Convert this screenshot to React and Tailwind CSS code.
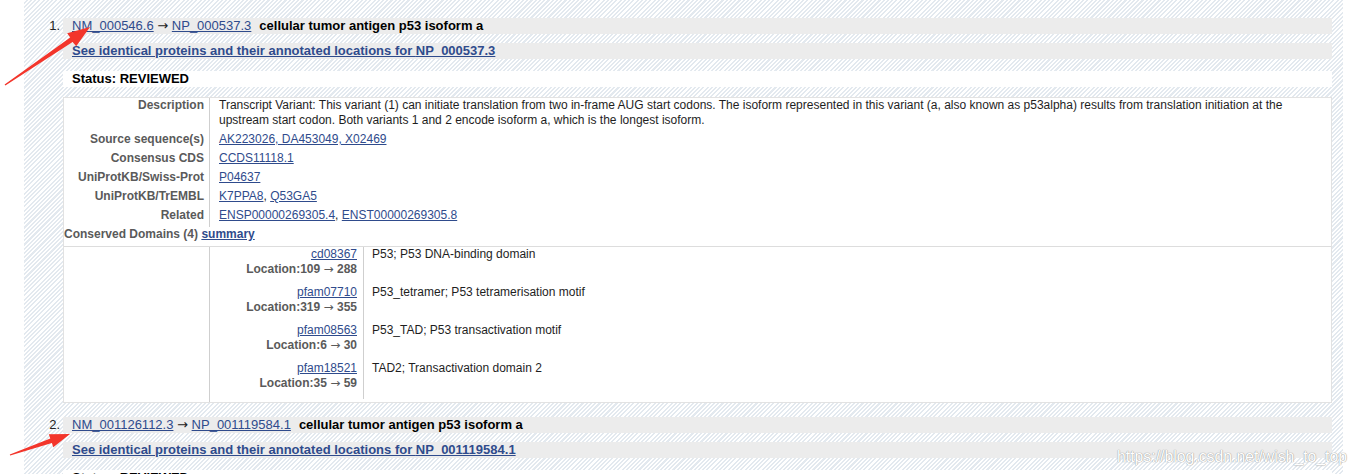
import React from 'react';

const link = 'text-[#2f4b8c] underline';

const ROWS = [
  { label: 'Source sequence(s)', links: ['AK223026', 'DA453049', 'X02469'], joined: true },
  { label: 'Consensus CDS', links: ['CCDS11118.1'] },
  { label: 'UniProtKB/Swiss-Prot', links: ['P04637'] },
  { label: 'UniProtKB/TrEMBL', links: ['K7PPA8', 'Q53GA5'] },
  { label: 'Related', links: ['ENSP00000269305.4', 'ENST00000269305.8'] },
];

const DOMAINS = [
  { id: 'cd08367', from: '109', to: '288', desc: 'P53; P53 DNA-binding domain' },
  { id: 'pfam07710', from: '319', to: '355', desc: 'P53_tetramer; P53 tetramerisation motif' },
  { id: 'pfam08563', from: '6', to: '30', desc: 'P53_TAD; P53 transactivation motif' },
  { id: 'pfam18521', from: '35', to: '59', desc: 'TAD2; Transactivation domain 2' },
];

// the arrow glyph is wider in the original than in Liberation Sans
const Arrow = () => <span className="font-['DejaVu_Sans',sans-serif] font-normal">{'\u2192'}</span>;

function LinkList({ links, joined }) {
  // the first row underlines the separators too
  if (joined) return <a className={link}>{links.join(', ')}</a>;
  return links.map((l, i) => (
    <span key={l}>
      {i > 0 && ', '}
      <a className={link}>{l}</a>
    </span>
  ));
}

function DetailTable() {
  return (
    <div className="w-[1269px] bg-white border border-[#e2e2e2] text-[12px] leading-[15px]">
      <div className="grid grid-cols-[146px_1fr]">
        <div className="border-r border-[#cfcfcf] pr-[5px] pb-[4px] text-right font-bold text-[#5a5a5a]">Description</div>
        <div className="pl-[9px] pb-[4px] text-[#1e1e1e]">
          Transcript Variant: This variant (1) can initiate translation from two in-frame AUG start codons. The isoform represented in this variant (a, also known as p53alpha) results from translation initiation at the
          <br />
          upstream start codon. Both variants 1 and 2 encode isoform a, which is the longest isoform.
        </div>
        {ROWS.map((r) => (
          <React.Fragment key={r.label}>
            <div className="border-r border-[#cfcfcf] pr-[5px] pb-[4px] text-right font-bold text-[#5a5a5a]">{r.label}</div>
            <div className="pl-[9px] pb-[4px] text-[#1e1e1e]">
              <LinkList links={r.links} joined={r.joined} />
            </div>
          </React.Fragment>
        ))}
      </div>
      <div className="border-b border-[#dddddd] pb-[4px] font-bold text-[#5a5a5a]">
        Conserved Domains (4) <a className={link}>summary</a>
      </div>
      <div className="grid grid-cols-[146px_1fr]">
        <div className="border-r border-[#cfcfcf]"></div>
        <div className="pb-[3px]">
          <div className="grid grid-cols-[154px_1fr]">
            {DOMAINS.map((d) => (
              <React.Fragment key={d.id}>
                <div className="border-r border-[#cfcfcf] pr-[6px] pb-[8px] text-right">
                  <a className={link}>{d.id}</a>
                  <div className="font-bold text-[#5a5a5a]">
                    Location:{d.from} <Arrow /> {d.to}
                  </div>
                </div>
                <div className="pl-[8px] pb-[8px] text-[#1e1e1e]">{d.desc}</div>
              </React.Fragment>
            ))}
          </div>
        </div>
      </div>
    </div>
  );
}

function Item({ n, nm, np, table = true, className = '' }) {
  return (
    <li className={`flex ${className}`}>
      <span className="w-[39px] shrink-0 pr-[3px] text-right text-[13px] leading-[16px] text-[#222]">{n}.</span>
      <div className="w-[1269px] text-[13px] leading-[16px]">
        <div className="h-[16px] bg-[#ececec] pl-[9px] text-[#222] whitespace-nowrap">
          <a className={link}>{nm}</a> <Arrow /> <a className={link}>{np}</a>
          <span className="ml-[8px] font-bold text-black">cellular tumor antigen p53 isoform a</span>
        </div>
        <div className="mt-[9px] h-[16px] bg-[#ececec] pl-[9px]">
          <a className={`${link} font-bold`}>See identical proteins and their annotated locations for {np}</a>
        </div>
        <div className="mt-[12px] h-[16px] bg-white pl-[9px] font-bold text-black">Status: REVIEWED</div>
        {table && (
          <div className="mt-[10px]">
            <DetailTable />
          </div>
        )}
      </div>
    </li>
  );
}

export default function App() {
  return (
    <div className="relative h-[474px] overflow-hidden bg-white font-['Liberation_Sans',Arial,sans-serif]">
      <div className="ml-[24px] w-[1319px] min-h-[474px] bg-[image:repeating-linear-gradient(135deg,#ffffff_0px,#ffffff_1.5px,#e3e9ef_1.5px,#e3e9ef_3px)] pt-[18px]">
        <ol>
          <Item n={1} nm="NM_000546.6" np="NP_000537.3" />
          <Item n={2} nm="NM_001126112.3" np="NP_001119584.1" table={false} className="mt-[14px]" />
        </ol>
      </div>

      {/* red annotation arrows */}
      <svg className="pointer-events-none absolute left-0 top-0" width="1357" height="474" viewBox="0 0 1357 474">
        <polygon
          fill="#f3352b"
          points="5.4,85.5 72.6,41.9 76.2,46.2 90,27 67.2,33.2 70.2,37.6 4.6,84.5"
        />
        <polygon
          fill="#f3352b"
          points="10.2,455.6 51.9,442.9 53.3,447.2 70,434 48.8,434.2 50.3,438.5 9.8,454.4"
        />
      </svg>

      <div className="pointer-events-none absolute left-[1117px] top-[447px] text-[15.8px] leading-[20px] text-white [text-shadow:0_0_1px_#9a9a9a,0_0_1px_#9a9a9a]">
        https://blog.csdn.net/wish_to_top
      </div>
    </div>
  );
}
